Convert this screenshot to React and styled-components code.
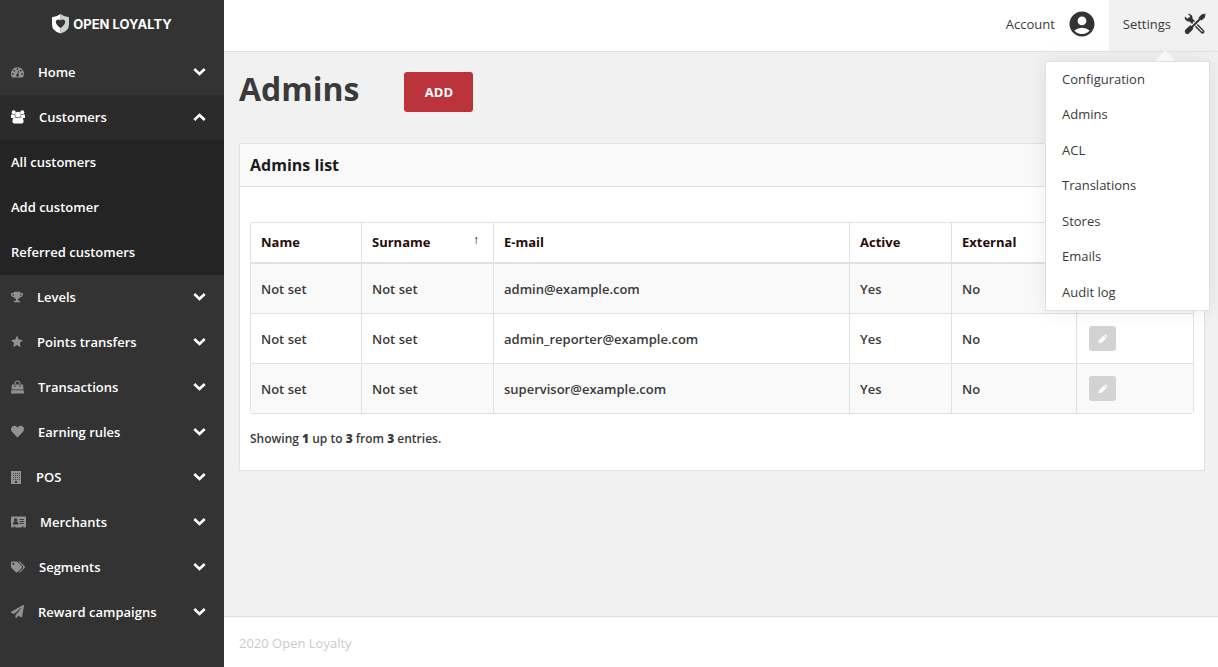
import React from "react";
import styled, { createGlobalStyle } from "styled-components";
import { FaTrophy, FaHeart, FaTags, FaPaperPlane } from "react-icons/fa";
import { MdAccountCircle } from "react-icons/md";

const Global = createGlobalStyle`
  * { box-sizing: border-box; }
  body {
    margin: 0;
    background: #f1f1f1;
    color: #3a3a3a;
    font: 400 13px/20px "Open Sans", "Noto Sans", sans-serif;
  }
  button { font: inherit; color: inherit; border: 0; background: none; padding: 0; cursor: pointer; }
  a { color: inherit; text-decoration: none; }
  ul { list-style: none; margin: 0; padding: 0; }
  svg { display: block; flex: none; }
`;

const Page = styled.div`
  display: grid;
  grid-template-columns: 224px minmax(0, 1fr);
  min-height: 100vh;
`;

const Sidebar = styled.aside`
  background: #333;
  color: #fff;
`;

const Logo = styled.a`
  display: flex;
  align-items: center;
  justify-content: center;
  gap: 4px;
  height: 50px;
  padding-bottom: 2px;
  font: 700 13px/20px Inter, "Open Sans", sans-serif;
`;

const NavButton = styled.button`
  display: flex;
  align-items: center;
  width: 100%;
  height: 45px;
  padding: 0 18px 2px 11px;
  font-weight: 600;
  text-align: left;
  background: ${(p) => (p.$open ? "#2b2b2b" : "transparent")};
`;

const NavIcon = styled.span`
  margin-right: 14px;
  color: ${(p) => (p.$open ? "#fff" : "#909295")};
`;

const NavLabel = styled.span`
  flex: 1;
`;

const SubMenu = styled.ul`
  background: #242424;
`;

const SubLink = styled.a`
  display: block;
  padding: 0 11px;
  line-height: 45px;
  font-weight: 600;
`;

const Content = styled.div`
  display: flex;
  flex-direction: column;
`;

const TopBar = styled.header`
  display: flex;
  justify-content: flex-end;
  height: 52px;
  background: #fff;
  border-bottom: 1px solid #e1e1e1;
`;

const TopItem = styled.div`
  position: relative;
  background: ${(p) => (p.$active ? "#f1f1f1" : "#fff")};
`;

const TopButton = styled.button`
  display: flex;
  align-items: center;
  gap: 12px;
  height: 51px;
  padding: 0 12px 4px 14px;
`;

const Menu = styled.ul`
  position: absolute;
  z-index: 2;
  top: 61px;
  right: 8px;
  display: flex;
  flex-direction: column;
  width: 165px;
  height: 250px;
  background: #fff;
  border: 1px solid #e1e1e1;
  box-shadow: 0 0 20px rgba(0, 0, 0, 0.08);

  &::before {
    content: "";
    position: absolute;
    top: -12px;
    right: 34px;
    border: solid transparent;
    border-width: 0 10px 11px;
    border-bottom-color: #f7f7f7;
  }
`;

const MenuItem = styled.li`
  flex: 1;
`;

const MenuLink = styled.a`
  display: block;
  padding: 0 16px;
  line-height: 35px;
`;

const Main = styled.main`
  flex: 1;
  padding: 20px 13px 20px 15px;
`;

const Heading = styled.div`
  display: flex;
  align-items: flex-start;
  gap: 45px;
  margin-bottom: 31px;
`;

const Title = styled.h1`
  margin: 0;
  font-size: 32px;
  line-height: 34px;
  font-weight: 700;
`;

const AddButton = styled.button`
  min-width: 69px;
  height: 40px;
  padding: 0 20px;
  border-radius: 3px;
  background: #bb333b;
  color: #fff;
  font-weight: 700;
`;

const Panel = styled.section`
  background: #fff;
  border: 1px solid #e1e1e1;
`;

const PanelTitle = styled.h2`
  margin: 0;
  padding: 0 10px;
  background: #f9f9f9;
  border-bottom: 1px solid #e1e1e1;
  color: #1b1b1b;
  font-size: 16px;
  line-height: 42px;
  font-weight: 700;
`;

const PanelBody = styled.div`
  padding: 35px 10px 21px;
`;

const Table = styled.table`
  width: 100%;
  table-layout: fixed;
  border: 1px solid #e1e1e1;
  border-radius: 3px;
  border-spacing: 0;
`;

const HeadCell = styled.th`
  width: ${(p) => p.$width || "auto"};
  height: 41px;
  padding: 0 10px 1px;
  border-bottom: 2px solid #e1e1e1;
  color: #270b0b;
  font-weight: 700;
  text-align: left;
  & + & { border-left: 1px solid #e1e1e1; }
`;

const HeadContent = styled.span`
  display: flex;
  justify-content: space-between;
  padding-right: 4px;
`;

const SortArrow = styled.span`
  font: 400 12px/16px "Liberation Sans", sans-serif;
`;

const Row = styled.tr`
  &:nth-child(odd) { background: #f9f9f9; }
  &:not(:last-child) td { border-bottom: 1px solid #e1e1e1; }
`;

const Cell = styled.td`
  height: 50px;
  padding: 0 10px;
  font-weight: 600;
  & + & { border-left: 1px solid #e1e1e1; }
  tr:last-child > & { height: 49px; }
`;

const EditButton = styled.button`
  display: grid;
  place-items: center;
  width: 27px;
  height: 25px;
  margin-left: 2px;
  border-radius: 3px;
  background: #d3d3d3;
`;

const Summary = styled.p`
  margin: 15px 0 0;
  font-size: 12px;
  font-weight: 600;
`;

const Footer = styled.footer`
  height: 51px;
  padding: 16px 15px;
  background: #fff;
  border-top: 1px solid #e1e1e1;
  color: #cbcbcb;
`;

const LogoMark = () => (
  <svg width="17" height="20" viewBox="0 0 17 20" aria-hidden="true">
    <path fill="#fff" d="M8.500 0Q5 2.800 0 3.300V10.500Q0 17 8.500 19.500Z" />
    <path fill="#cfd3d0" d="M8.500 0Q12 2.800 17 3.300V10.500Q17 17 8.500 19.500Z" />
    <path fill="#333" d="M8.500 14Q3.800 10.800 3.800 7.700Q4 5.500 6.200 5.500Q7.700 5.500 8.500 6.600Q9.300 5.500 10.800 5.500Q13 5.500 13.200 7.700Q13.200 10.800 8.500 14Z" />
  </svg>
);

const DashboardIcon = () => (
  <svg width="13" height="14" viewBox="0 0 1792 1792" fill="currentColor" aria-hidden="true">
    <path d="M384 1152q0-53-37.5-90.5t-90.5-37.5-90.5 37.5-37.5 90.5 37.5 90.5 90.5 37.5 90.5-37.5 37.5-90.5zm192-448q0-53-37.5-90.5t-90.5-37.5-90.5 37.5-37.5 90.5 37.5 90.5 90.5 37.5 90.5-37.5 37.5-90.5zm428 481l101-382q6-26-7.5-48.5t-38.5-29.5-48 6.5-30 39.5l-101 382q-60 5-107 43.5t-63 98.5q-20 77 20 146t117 89 146-20 89-117q16-60-6-117t-72-91zm660-33q0-53-37.5-90.5t-90.5-37.5-90.5 37.5-37.5 90.5 37.5 90.5 90.5 37.5 90.5-37.5 37.5-90.5zm-640-640q0-53-37.5-90.5t-90.5-37.5-90.5 37.5-37.5 90.5 37.5 90.5 90.5 37.5 90.5-37.5 37.5-90.5zm448 192q0-53-37.5-90.5t-90.5-37.5-90.5 37.5-37.5 90.5 37.5 90.5 90.5 37.5 90.5-37.5 37.5-90.5zm320 448q0 261-141 483-19 29-54 29h-1402q-35 0-54-29-141-221-141-483 0-182 71-348t191-286 286-191 348-71 348 71 286 191 191 286 71 348z" />
  </svg>
);

const CustomersIcon = () => (
  <svg width="14" height="14" viewBox="0 0 14 14" fill="currentColor" aria-hidden="true">
    <circle cx="2.700" cy="2.200" r="2" />
    <circle cx="11.300" cy="2.200" r="2" />
    <circle cx="7" cy="4.600" r="2.800" />
    <path d="M0 7.400V5.300Q.1 4.200 1.200 4.200Q2.400 4.900 3.700 4.500Q3.700 6 4.700 7.100Q3.600 7.200 2.900 8.100H1Q0 8.100 0 7.400ZM14 7.400V5.300Q13.900 4.200 12.800 4.200Q11.600 4.900 10.300 4.500Q10.300 6 9.300 7.100Q10.400 7.200 11.100 8.100H13Q14 8.100 14 7.400Z" />
    <path d="M4.300 7.300Q7 8.600 9.700 7.300Q12.600 7.400 12.600 11.500Q12.600 13.500 10.600 13.500H3.400Q1.400 13.500 1.400 11.500Q1.400 7.400 4.300 7.300Z" />
  </svg>
);

const StarIcon = () => (
  <svg width="12" height="14" viewBox="0 0 12 14" fill="currentColor" aria-hidden="true">
    <path d="M6 .5L7.800 4.600L12 5L8.900 7.900L9.700 12.200L6 10L2.300 12.200L3.100 7.900L0 5L4.200 4.600Z" />
  </svg>
);

const BagIcon = () => (
  <svg width="13" height="14" viewBox="0 0 13 14" fill="currentColor" aria-hidden="true">
    <path fill="none" stroke="currentColor" strokeWidth="1.100" d="M4 6V3.500Q4.200 1 6.500 1Q8.800 1 9 3.500V6" />
    <path d="M1 4.500H3.100V6.500H4.900V4.500H8.100V6.500H9.900V4.500H12L12.500 9.600H.5Z" />
    <path d="M.4 10.300H12.600L13 13.500H0Z" />
  </svg>
);

const BuildingIcon = () => (
  <svg width="11" height="14" viewBox="0 0 11 14" aria-hidden="true">
    <path fill="currentColor" d="M0 1H10V14H0Z" />
    <path stroke="#333" strokeWidth="1" strokeDasharray="1 1" opacity=".75" d="M2 3.500H9M2 5.500H9M2 7.500H9M2 9.500H9" />
    <path fill="#333" d="M4 11H6V13H4Z" />
  </svg>
);

const CardIcon = () => (
  <svg width="15" height="14" viewBox="0 0 15 14" aria-hidden="true">
    <path fill="currentColor" d="M1 1.500H14Q15 1.500 15 2.500V11.500Q15 12.500 14 12.500H12.500V11.600H10.800V12.500H4.200V11.600H2.500V12.500H1Q0 12.500 0 11.500V2.500Q0 1.500 1 1.500Z" />
    <circle fill="#333" cx="4.700" cy="5" r="1.700" />
    <path fill="#333" d="M2 9.500V8.300Q2.200 6.600 3.500 6.500Q4.700 7.200 5.900 6.500Q7.200 6.600 7.400 8.300V9.500Z" />
    <path stroke="#333" strokeWidth=".9" d="M8.500 4.500H13M8.500 6.500H13M8.500 8.500H13" />
  </svg>
);

const Chevron = ({ up }) => (
  <svg width="13" height="10" viewBox="0 0 13 10" fill="none" stroke="#fff" strokeWidth="2.600" aria-hidden="true">
    <path d={up ? "M1.300 8L6.500 3L11.700 8" : "M1.300 2L6.500 7L11.700 2"} />
  </svg>
);

const ToolsIcon = () => (
  <svg width="23" height="22" viewBox="-1 0 23 22" aria-hidden="true">
    <path fill="none" stroke="#333" strokeWidth="4" strokeLinecap="round" d="M6 6L18.500 18.600" />
    <path fill="none" stroke="#f1f1f1" strokeWidth="1.100" d="M9 9L18.500 18.600" />
    <path fill="#333" d="M3.600.7Q6.400.4 7.900 2.400Q9 4.200 8.200 6.700L6.300 8.400Q3.600 8.900 1.800 7.300Q.4 5.800.8 3.600L3.700 5.800L5.800 4.900L6.100 3Z" />
    <path stroke="#f1f1f1" strokeWidth="4" d="M8.800 13.200L14 8" />
    <path stroke="#333" strokeWidth="2" d="M6.500 15.500L17.500 4.500" />
    <path fill="#333" d="M14.500 4.800L17.500 1.600L21.500.6L20.900 4.500L17.500 7.400Z" />
    <path stroke="#333" strokeWidth="5" strokeLinecap="round" d="M3.300 18.400L6.600 15.200" />
  </svg>
);

const PencilIcon = () => (
  <svg width="10" height="10" viewBox="0 0 10 10" fill="#fff" aria-hidden="true">
    <path d="M1 6.300L5.700 1.700L8.200 4.200L3.600 8.800L.7 9.100Z" />
    <path d="M6.300 1.200L7 .6Q7.500.3 8 .7L9.200 1.900Q9.600 2.400 9.200 2.900L8.700 3.600Z" />
  </svg>
);

const nav = [
  { label: "Home", icon: <DashboardIcon /> },
  {
    label: "Customers",
    icon: <CustomersIcon />,
    children: ["All customers", "Add customer", "Referred customers"],
  },
  { label: "Levels", icon: <FaTrophy size={12} /> },
  { label: "Points transfers", icon: <StarIcon /> },
  { label: "Transactions", icon: <BagIcon /> },
  { label: "Earning rules", icon: <FaHeart size={13} /> },
  { label: "POS", icon: <BuildingIcon /> },
  { label: "Merchants", icon: <CardIcon /> },
  { label: "Segments", icon: <FaTags size={14} /> },
  { label: "Reward campaigns", icon: <FaPaperPlane size={13} /> },
];

const settings = ["Configuration", "Admins", "ACL", "Translations", "Stores", "Emails", "Audit log"];
const emails = ["admin@example.com", "admin_reporter@example.com", "supervisor@example.com"];

export default function App() {
  return (
    <>
      <Global />
      <Page>
        <Sidebar>
          <Logo href="#"><LogoMark />OPEN LOYALTY</Logo>
          <nav>
            <ul>
              {nav.map(({ label, icon, children }) => (
                <li key={label}>
                  <NavButton type="button" $open={!!children} aria-expanded={!!children}>
                    <NavIcon $open={!!children}>{icon}</NavIcon>
                    <NavLabel>{label}</NavLabel>
                    <Chevron up={!!children} />
                  </NavButton>
                  {children && (
                    <SubMenu>
                      {children.map((c) => <li key={c}><SubLink href="#">{c}</SubLink></li>)}
                    </SubMenu>
                  )}
                </li>
              ))}
            </ul>
          </nav>
        </Sidebar>
        <Content>
          <TopBar>
            <TopItem>
              <TopButton type="button">Account<MdAccountCircle size={30} color="#333" /></TopButton>
            </TopItem>
            <TopItem $active>
              <TopButton type="button" aria-expanded="true">Settings<ToolsIcon /></TopButton>
              <Menu>
                {settings.map((s) => <MenuItem key={s}><MenuLink href="#">{s}</MenuLink></MenuItem>)}
              </Menu>
            </TopItem>
          </TopBar>
          <Main>
            <Heading>
              <Title>Admins</Title>
              <AddButton type="button">ADD</AddButton>
            </Heading>
            <Panel>
              <PanelTitle>Admins list</PanelTitle>
              <PanelBody>
                <Table>
                  <thead>
                    <tr>
                      <HeadCell $width="110px">Name</HeadCell>
                      <HeadCell $width="132px">
                        <HeadContent>Surname<SortArrow>↑</SortArrow></HeadContent>
                      </HeadCell>
                      <HeadCell>E-mail</HeadCell>
                      <HeadCell $width="102px">Active</HeadCell>
                      <HeadCell $width="125px">External</HeadCell>
                      <HeadCell $width="117px" aria-label="Actions" />
                    </tr>
                  </thead>
                  <tbody>
                    {emails.map((email) => (
                      <Row key={email}>
                        <Cell>Not set</Cell>
                        <Cell>Not set</Cell>
                        <Cell>{email}</Cell>
                        <Cell>Yes</Cell>
                        <Cell>No</Cell>
                        <Cell><EditButton type="button" aria-label="Edit"><PencilIcon /></EditButton></Cell>
                      </Row>
                    ))}
                  </tbody>
                </Table>
                <Summary>Showing <b>1</b> up to <b>3</b> from <b>3</b> entries.</Summary>
              </PanelBody>
            </Panel>
          </Main>
          <Footer>2020 Open Loyalty</Footer>
        </Content>
      </Page>
    </>
  );
}
